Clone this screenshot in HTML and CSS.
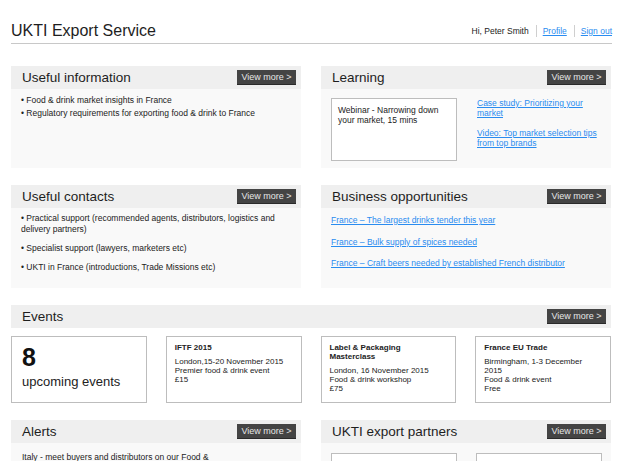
FILE: index.html
```html
<!DOCTYPE html>
<html lang="en">
<head>
<meta charset="utf-8">
<title>UKTI Export Service</title>
<link rel="stylesheet" href="styles.css">
</head>
<body>
<div class="page">
  <header class="topbar">
    <h1 class="site-title">UKTI Export Service</h1>
    <nav class="usernav">
      <span class="greeting">Hi, Peter Smith</span>
      <span class="sep"></span>
      <a href="#">Profile</a>
      <span class="sep"></span>
      <a href="#">Sign out</a>
    </nav>
  </header>

  <main class="grid">
    <section class="panel">
      <div class="panel-head">
        <h2 class="panel-title">Useful information</h2>
        <a class="btn" href="#">View more &gt;</a>
      </div>
      <div class="panel-body row1">
        <ul class="info-list">
          <li>• Food &amp; drink market insights in France</li>
          <li>• Regulatory requirements for exporting food &amp; drink to France</li>
        </ul>
      </div>
    </section>

    <section class="panel">
      <div class="panel-head">
        <h2 class="panel-title">Learning</h2>
        <a class="btn" href="#">View more &gt;</a>
      </div>
      <div class="panel-body row1 learning">
        <div class="media-box">Webinar - Narrowing down your market, 15 mins</div>
        <div class="learn-links">
          <a href="#">Case study: Prioritizing your market</a>
          <a href="#">Video: Top market selection tips from top brands</a>
        </div>
      </div>
    </section>

    <section class="panel">
      <div class="panel-head">
        <h2 class="panel-title">Useful contacts</h2>
        <a class="btn" href="#">View more &gt;</a>
      </div>
      <div class="panel-body row2">
        <ul class="contact-list">
          <li>• Practical support (recommended agents, distributors, logistics and delivery partners)</li>
          <li>• Specialist support (lawyers, marketers etc)</li>
          <li>• UKTI in France (introductions, Trade Missions etc)</li>
        </ul>
      </div>
    </section>

    <section class="panel">
      <div class="panel-head">
        <h2 class="panel-title">Business opportunities</h2>
        <a class="btn" href="#">View more &gt;</a>
      </div>
      <div class="panel-body row2 opps">
        <a href="#">France – The largest drinks tender this year</a>
        <a href="#">France – Bulk supply of spices needed</a>
        <a href="#">France – Craft beers needed by established French distributor</a>
      </div>
    </section>

    <section class="events">
      <div class="panel-head">
        <h2 class="panel-title">Events</h2>
        <a class="btn" href="#">View more &gt;</a>
      </div>
      <div class="event-cards">
        <div class="card count-card">
          <div class="count">8</div>
          <div class="count-label">upcoming events</div>
        </div>
        <div class="card event-card">
          <div class="event-title">IFTF 2015</div>
          <div class="event-info">London,15-20 November 2015<br>Premier food &amp; drink event<br>£15</div>
        </div>
        <div class="card event-card">
          <div class="event-title">Label &amp; Packaging Masterclass</div>
          <div class="event-info">London, 16 November 2015<br>Food &amp; drink workshop<br>£75</div>
        </div>
        <div class="card event-card">
          <div class="event-title">France EU Trade</div>
          <div class="event-info">Birmingham, 1-3 December 2015<br>Food &amp; drink event<br>Free</div>
        </div>
      </div>
    </section>

    <section class="panel">
      <div class="panel-head">
        <h2 class="panel-title">Alerts</h2>
        <a class="btn" href="#">View more &gt;</a>
      </div>
      <div class="panel-body alerts">
        <p>Italy - meet buyers and distributors on our Food &amp; Drink Trade Mission, 3-6 November</p>
      </div>
    </section>

    <section class="panel">
      <div class="panel-head">
        <h2 class="panel-title">UKTI export partners</h2>
        <a class="btn" href="#">View more &gt;</a>
      </div>
      <div class="panel-body partners">
        <div class="partner-box"></div>
        <div class="partner-box"></div>
      </div>
    </section>
  </main>
</div>
</body>
</html>
```

FILE: styles.css
```css
* {
  box-sizing: border-box;
}

html {
  overflow: hidden;
}

body {
  margin: 0;
  background: #ffffff;
  color: #222222;
  font-family: "Liberation Sans", Arial, Helvetica, sans-serif;
}

a {
  color: #2a8cf0;
  text-decoration: underline;
}

.page {
  width: 620px;
  padding: 0 9px 0 11px;
}

/* Top bar */
.topbar {
  display: flex;
  justify-content: space-between;
  align-items: center;
  height: 44px;
  padding: 21px 0 2px;
  margin-right: -1px;
  border-bottom: 1px solid #c8c8c8;
}

.site-title {
  margin: 0;
  font-size: 16px;
  line-height: 20px;
  font-weight: normal;
  color: #1e1e1e;
}

.usernav {
  display: flex;
  align-items: center;
  font-size: 8.5px;
  line-height: 12px;
}

.usernav .sep {
  width: 1px;
  height: 12px;
  background: #cfcfcf;
  margin: 0 6px 0 7px;
}

/* Grid */
.grid {
  display: grid;
  grid-template-columns: 290px 290px;
  column-gap: 20px;
  row-gap: 17px;
  margin-top: 22px;
}

.panel-head {
  display: flex;
  justify-content: space-between;
  align-items: center;
  height: 23px;
  padding: 0 5px 0 11px;
  background: #efefef;
}

.panel-title {
  margin: 0;
  font-size: 13.5px;
  font-weight: normal;
  color: #1e1e1e;
}

.btn {
  display: block;
  width: 59px;
  height: 15px;
  background: #444444;
  border-bottom: 1px solid #2a2a2a;
  color: #e6e6e6;
  font-size: 9px;
  line-height: 14px;
  text-align: center;
  text-decoration: none;
}

.panel-body {
  background: #f9f9f9;
  font-size: 8.5px;
  line-height: 10.5px;
}

.row1 {
  height: 79px;
}

.row2 {
  height: 80px;
}

/* Useful information */
.info-list {
  list-style: none;
  margin: 0;
  padding: 5px 10px 0 10px;
  line-height: 13px;
}

/* Learning */
.learning {
  display: flex;
  gap: 20px;
  padding: 9px 10px 0 10px;
}

.media-box {
  flex: 0 0 126px;
  height: 63px;
  background: #ffffff;
  border: 1px solid #bdbdbd;
  padding: 6px 8px 0 6px;
  line-height: 10px;
}

.learn-links {
  display: flex;
  flex-direction: column;
  gap: 10px;
  width: 124px;
  padding-top: -1px;
  line-height: 10px;
}

/* Useful contacts */
.contact-list {
  list-style: none;
  margin: 0;
  padding: 5px 16px 0 10px;
}

.contact-list li {
  margin-bottom: 8.5px;
}

/* Business opportunities */
.opps {
  display: flex;
  flex-direction: column;
  align-items: flex-start;
  gap: 11px;
  padding: 7px 10px 0 10px;
}

/* Events */
.events {
  grid-column: 1 / -1;
}

.event-cards {
  display: grid;
  grid-template-columns: repeat(4, 1fr);
  column-gap: 19px;
  margin-top: 8px;
}

.card {
  height: 67px;
  background: #ffffff;
  border: 1px solid #bdbdbd;
}

.count-card {
  padding: 7px 8px 0 10px;
}

.count {
  font-size: 25px;
  line-height: 26px;
  font-weight: bold;
  color: #111111;
}

.count-label {
  margin-top: 4px;
  font-size: 13px;
  line-height: 15px;
}

.event-card {
  padding: 6px 14px 0 8px;
  font-size: 8px;
  line-height: 9px;
}

.event-title {
  font-weight: bold;
}

.event-info {
  margin-top: 5px;
}

/* Alerts */
.alerts {
  padding: 9px 10px 0 11px;
  height: 40px;
}

.alerts p {
  margin: 0;
  max-width: 200px;
}

/* Partners */
.partners {
  display: flex;
  gap: 19px;
  padding: 10px 10px 0 10px;
  height: 40px;
}

.partner-box {
  flex: 0 0 126px;
  height: 63px;
  background: #ffffff;
  border: 1px solid #bdbdbd;
}
```
